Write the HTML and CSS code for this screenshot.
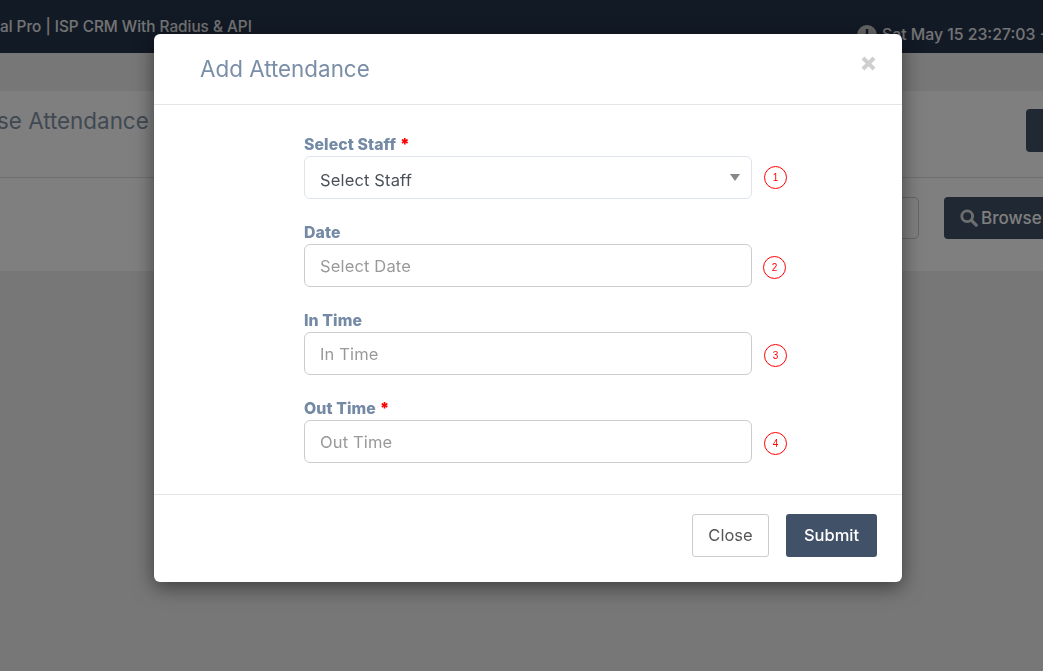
FILE: index.html
```html
<!DOCTYPE html>
<html lang="en">
<head>
<meta charset="utf-8">
<title>Add Attendance</title>
<link rel="stylesheet" href="styles.css">
</head>
<body>
<div class="page">
  <header class="topbar">
    <span class="brand">al Pro | ISP CRM With Radius &amp; API</span>
    <span class="clock">
      <svg class="clock-icon" width="20" height="20" viewBox="0 0 20 20"><circle cx="10" cy="10" r="10" fill="#ccc"/><path d="M10 4v7" stroke="#232f3e" stroke-width="2.4" fill="none"/></svg>
      Sat May 15 23:27:03 +
    </span>
  </header>
  <main class="panel">
    <div class="panel-head">
      <h2 class="panel-title">se Attendance</h2>
      <span class="panel-action"></span>
    </div>
    <div class="panel-filter">
      <span class="filter-input"></span>
      <button class="browse" type="button">
        <svg width="18" height="18" viewBox="0 0 18 18"><circle cx="7.2" cy="7.2" r="5.4" fill="none" stroke="#ddd" stroke-width="2.8"/><path d="M11.2 11.2l5 5" stroke="#ddd" stroke-width="3.2" stroke-linecap="round"/></svg>
        Browse
      </button>
    </div>
  </main>
</div>
<div class="backdrop"></div>
<section class="modal">
  <header class="modal-head">
    <h3 class="modal-title">Add Attendance</h3>
    <svg class="modal-x" width="15" height="15" viewBox="0 0 15 15"><path d="M2 2l11 11M13 2L2 13" stroke="#cfcfcf" stroke-width="4" fill="none"/></svg>
  </header>
  <form class="modal-body">
    <div class="field">
      <label class="label">Select Staff<b class="req">*</b></label>
      <div class="row">
        <div class="select-wrap">
          <select class="control select"><option>Select Staff</option></select>
        </div>
        <span class="step">1</span>
      </div>
    </div>
    <div class="field">
      <label class="label">Date</label>
      <div class="row">
        <input class="control" placeholder="Select Date">
        <span class="step step-low step-left">2</span>
      </div>
    </div>
    <div class="field">
      <label class="label">In Time</label>
      <div class="row">
        <input class="control" placeholder="In Time">
        <span class="step step-low">3</span>
      </div>
    </div>
    <div class="field">
      <label class="label">Out Time<b class="req">*</b></label>
      <div class="row">
        <input class="control" placeholder="Out Time">
        <span class="step step-low">4</span>
      </div>
    </div>
  </form>
  <footer class="modal-foot">
    <button class="btn btn-close" type="button">Close</button>
    <button class="btn btn-submit" type="button">Submit</button>
  </footer>
</section>
</body>
</html>
```

FILE: styles.css
```css
* { box-sizing: border-box; }
html, body { margin: 0; height: 100%; overflow: hidden; }
body {
  font-family: "Inter", "Roboto", "Liberation Sans", sans-serif;
  background: #eeeeee;
  color: #495057;
}
.page { height: 671px; overflow: hidden; }
.topbar {
  height: 53px;
  background: #24344c;
  color: #fff;
  display: flex;
  justify-content: space-between;
  font-size: 15px;
}
.brand { padding-top: 17px; font-size: 15.3px; font-weight: 500; color: #e8e8e8; white-space: nowrap; }
.clock { display: flex; gap: 5px; padding-top: 25px; white-space: nowrap; font-size: 15.8px; font-weight: 500; color: #e8e8e8; width: 186px; overflow: hidden; }
.clock-icon { flex: none; }
.panel {
  margin-top: 38px;
  height: 180px;
  background: #fff;
  display: flex;
  flex-direction: column;
}
.panel-head {
  height: 87px;
  border-bottom: 1px solid #dcdcdc;
  display: flex;
  justify-content: space-between;
  padding-top: 19px;
}
.panel-title { margin: 0 0 0 -3px; font-size: 22.4px; font-weight: 400; color: #8292a6; line-height: 22px; }
.panel-action { width: 17px; height: 43px; margin-top: -1px; background: #3f5066; border-radius: 4px 0 0 4px; }
.panel-filter { display: flex; justify-content: flex-end; padding-top: 19px; gap: 25px; }
.filter-input { width: 60px; height: 42px; border: 1px solid #ccc; border-radius: 5px; background: #fff; }
.browse {
  width: 99px; height: 42px; padding: 0 0 0 16px;
  display: flex; align-items: center; gap: 3px;
  border: 0; border-radius: 4px 0 0 4px;
  background: #3f5066; color: #fff;
  font: 500 17px "Inter", "Roboto", sans-serif;
  overflow: hidden; white-space: nowrap;
}
.backdrop { position: fixed; inset: 0; background: rgba(0, 0, 0, .5); }
.modal {
  position: absolute;
  left: 154px; top: 34px;
  width: 748px; height: 548px;
  background: #fff;
  border-radius: 6px;
  box-shadow: 0 5px 20px rgba(0, 0, 0, .5);
  display: flex;
  flex-direction: column;
}
.modal-head {
  height: 71px;
  border-bottom: 1px solid #e5e5e5;
  display: flex;
  justify-content: space-between;
  padding: 21px 26px 0 46px;
}
.modal-title { margin: 0; font-size: 22.4px; line-height: 28px; font-weight: 400; color: #7a8ea8; }
.modal-x { flex: none; margin-top: 1px; }
.modal-body { flex: 1; padding: 29px 0 0 150px; display: flex; flex-direction: column; gap: 23px; }
.field { display: flex; flex-direction: column; }
.label { font-size: 15.8px; line-height: 22px; font-weight: 800; letter-spacing: .1px; color: #7389a4; }
.req { color: #f00; margin-left: 4px; }
.row { display: flex; align-items: center; gap: 12px; }
.select-wrap { position: relative; width: 448px; }
.select-wrap::after {
  content: "";
  position: absolute; right: 12px; top: 18px;
  border: 5px solid transparent;
  border-top: 7px solid #888;
  border-bottom: 0;
}
.control {
  width: 448px; height: 43px;
  padding: 1px 15px 0;
  border: 1px solid #ccc;
  border-radius: 6px;
  background: #fff;
  font: 400 16.5px "Inter", "Roboto", sans-serif;
  letter-spacing: .15px;
  color: #495057;
  outline: none;
}
.control::placeholder { color: #999; opacity: 1; }
.select { appearance: none; border-color: #dfe4ec; display: block; padding-top: 4px; }
.step {
  width: 23px; height: 23px; flex: none;
  display: flex; align-items: center; justify-content: center;
  border: 1px solid #f00;
  border-radius: 50%;
  color: #f00;
  font: 400 10px "Liberation Sans", sans-serif;
}
.step-low { margin-top: 4px; }
.step-left { margin-left: -1px; }
.modal-foot {
  height: 88px;
  border-top: 1px solid #e5e5e5;
  display: flex;
  justify-content: flex-end;
  gap: 17px;
  padding: 19px 25px 0 0;
}
.btn { height: 43px; border-radius: 3px; padding: 0 0 2px; font: 400 16.5px "Inter", "Roboto", sans-serif; }
.btn-close { width: 77px; background: #fff; border: 1px solid #ccc; color: #555; }
.btn-submit { width: 91px; background: #415268; border: 0; color: #fff; font-weight: 500; }
```
